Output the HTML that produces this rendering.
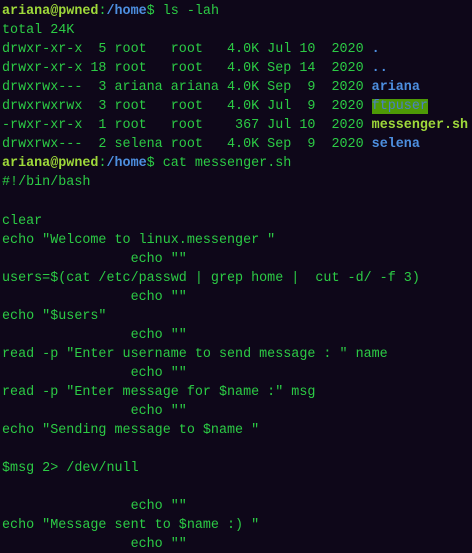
<!DOCTYPE html>
<html><head><meta charset="utf-8"><style>
html,body{margin:0;padding:0;background:#0e0719;width:472px;height:553px;overflow:hidden}
pre{margin:0;padding:2px 0 0 2px;font-family:"Liberation Mono","DejaVu Sans Mono",monospace;font-size:13.4px;line-height:19.05px;color:#2ccb45;white-space:pre}
.u{color:#9fd93a;font-weight:bold}
.p{color:#4d8fe0;font-weight:bold}
.d{color:#4d8fe0;font-weight:bold}
.x{color:#9fd93a;font-weight:bold}
.o{background:#4e9a06;color:#4a80c8}
</style></head><body><pre><span class="u">ariana@pwned</span>:<span class="p">/home</span>$ ls -lah
total 24K
drwxr-xr-x  5 root   root   4.0K Jul 10  2020 <span class="d">.</span>
drwxr-xr-x 18 root   root   4.0K Sep 14  2020 <span class="d">..</span>
drwxrwx---  3 ariana ariana 4.0K Sep  9  2020 <span class="d">ariana</span>
drwxrwxrwx  3 root   root   4.0K Jul  9  2020 <span class="o">ftpuser</span>
-rwxr-xr-x  1 root   root    367 Jul 10  2020 <span class="x">messenger.sh</span>
drwxrwx---  2 selena root   4.0K Sep  9  2020 <span class="d">selena</span>
<span class="u">ariana@pwned</span>:<span class="p">/home</span>$ cat messenger.sh
#!/bin/bash

clear
echo "Welcome to linux.messenger "
                echo ""
users=$(cat /etc/passwd | grep home |  cut -d/ -f 3)
                echo ""
echo "$users"
                echo ""
read -p "Enter username to send message : " name
                echo ""
read -p "Enter message for $name :" msg
                echo ""
echo "Sending message to $name "

$msg 2> /dev/null

                echo ""
echo "Message sent to $name :) "
                echo ""
</pre></body></html>
